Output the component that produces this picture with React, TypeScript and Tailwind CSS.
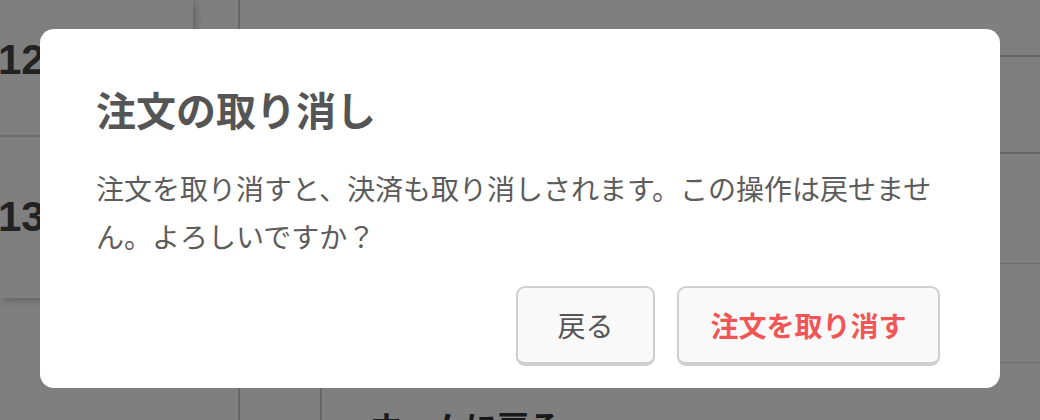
const jp = "font-['Noto_Sans_CJK_JP','Noto_Sans',sans-serif]";

const CancelOrderDialog = () => {
  return (
    <div className="w-[960px] h-[359px] bg-white rounded-[14px] pt-[52px] pl-[56px] pr-[60px] pb-[22px] flex flex-col">
      <h2 className="text-[40px] leading-[56px] font-bold text-[#555555]">
        注文の取り消し
      </h2>
      <p className="mt-[27px] text-[28px] leading-[48px] text-[#5c5c5c]">
        注文を取り消すと、決済も取り消しされます。この操作は戻せません。よろしいですか？
      </p>
      <div className="mt-auto flex justify-end gap-[22px]">
        <button className="w-[139px] h-[80px] rounded-[9px] border-2 border-b-4 border-[#cfcfcf] bg-[#f9f9f9] text-[28px] text-[#555555]">
          戻る
        </button>
        <button className="w-[263px] h-[80px] rounded-[9px] border-2 border-b-4 border-[#cfcfcf] bg-[#f9f9f9] text-[28px] font-bold text-[#f25555]">
          注文を取り消す
        </button>
      </div>
    </div>
  );
};

export default function App() {
  return (
    <div className={`relative w-[1040px] h-[420px] overflow-hidden bg-white ${jp}`}>
      {/* page behind the overlay */}
      <div className="flex h-full">
        <div className="w-[193px] h-[298px] bg-white shadow-[2px_2px_8px_rgba(0,0,0,0.25)] flex flex-col">
          <div className="h-[137px] border-b-2 border-[#dddddd] pt-[28px] -ml-[2px]">
            <span className="text-[42px] font-bold text-[#444444] font-['Liberation_Sans',sans-serif]">12</span>
          </div>
          <div className="flex-1 pt-[48px] -ml-[2px]">
            <span className="text-[42px] font-bold text-[#444444] font-['Liberation_Sans',sans-serif]">13</span>
          </div>
        </div>
        <div className="w-[45px]" />
        <div className="flex-1 border-l-2 border-[#cccccc] flex flex-col">
          <div className="h-[57px] shrink-0 border-b-2 border-[#cccccc]" />
          <div className="h-[97px] shrink-0 border-b-2 border-[#cccccc]" />
          <div className="h-[110px] shrink-0 border-b border-[#dddddd]" />
          <div className="h-[99px] shrink-0 border-b border-[#dddddd]" />
          <div className="flex-1 flex">
            <div className="w-[82px] border-r-2 border-[#cccccc]" />
            <div className="pl-[48px] pt-[46px] text-[32px] font-bold text-[#333333] leading-none whitespace-nowrap">
              ホームに戻る
            </div>
          </div>
        </div>
      </div>

      {/* overlay */}
      <div className="absolute inset-0 bg-black/50 flex items-start justify-center pt-[29px]">
        <CancelOrderDialog />
      </div>
    </div>
  );
}
